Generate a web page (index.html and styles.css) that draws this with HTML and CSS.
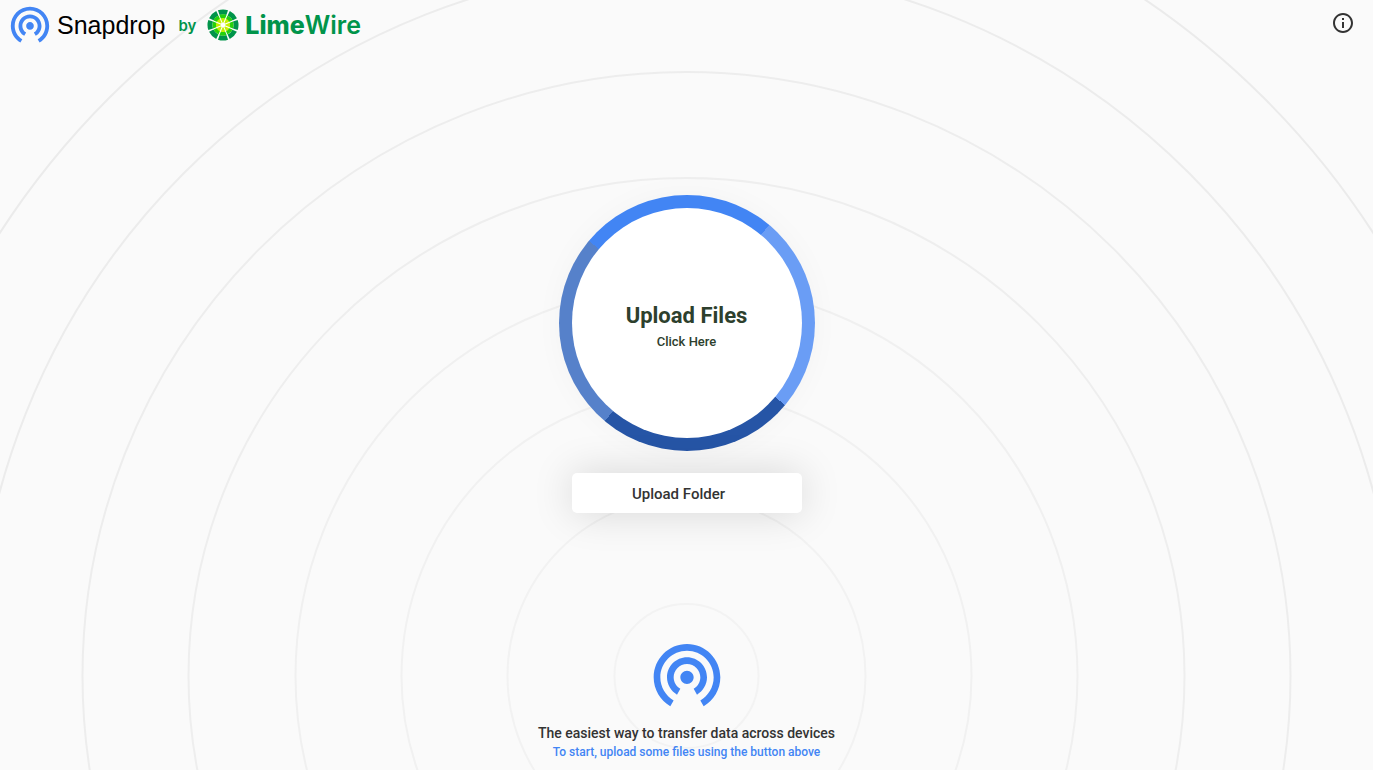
FILE: index.html
```
<!DOCTYPE html>
<html lang="en">
<head>
  <meta charset="UTF-8">
  <meta name="viewport" content="width=device-width, initial-scale=1.0">
  <title>Snapdrop</title>
  <link rel="stylesheet" href="styles.css">
</head>
<body>

  <svg class="background" aria-hidden="true">
    <g transform="translate(0 -94)">
      <circle cx="50%" cy="100%" r="72" stroke="#f3f3f3"/>
      <circle cx="50%" cy="100%" r="179" stroke="#f2f2f2"/>
      <circle cx="50%" cy="100%" r="285" stroke="#f1f1f1"/>
      <circle cx="50%" cy="100%" r="391" stroke="#f0f0f0"/>
      <circle cx="50%" cy="100%" r="498" stroke="#eeeeee"/>
      <circle cx="50%" cy="100%" r="604" stroke="#ededed"/>
      <circle cx="50%" cy="100%" r="711" stroke="#ececec"/>
      <circle cx="50%" cy="100%" r="817" stroke="#ebebeb"/>
    </g>
  </svg>

  <svg class="symbols" aria-hidden="true">
    <symbol id="snapdrop" viewBox="0 0 24 24">
      <path d="M12 11c-1.1 0-2 .9-2 2s.9 2 2 2 2-.9 2-2-.9-2-2-2zm6 2c0-3.31-2.69-6-6-6s-6 2.69-6 6c0 2.22 1.21 4.15 3 5.19l1-1.74c-1.19-.7-2-1.97-2-3.45 0-2.21 1.79-4 4-4s4 1.79 4 4c0 1.48-.81 2.75-2 3.45l1 1.74c1.79-1.04 3-2.97 3-5.19zM12 3C6.48 3 2 7.48 2 13c0 3.7 2.01 6.92 4.99 8.65l1-1.73C5.61 18.53 4 15.96 4 13c0-4.42 3.58-8 8-8s8 3.58 8 8c0 2.96-1.61 5.53-4 6.92l1 1.73c2.99-1.73 5-4.95 5-8.65 0-5.52-4.48-10-10-10z"/>
    </symbol>
  </svg>

  <header>
    <a class="brand" href="#">
      <svg class="brand-icon" aria-hidden="true"><use href="#snapdrop"/></svg>
      <span class="brand-name">Snapdrop</span>
      <span class="by">by</span>
      <svg class="lime" viewBox="-16 -16 32 32" aria-hidden="true">
        <g fill="none" transform="rotate(-22.5)">
          <circle r="13" stroke="#00944a" stroke-width="5" pathLength="80" stroke-dasharray="8.4 1.6" stroke-dashoffset="-0.8"/>
          <circle r="8.6" stroke="#26d00c" stroke-width="4"/>
          <circle r="4.6" stroke="#c4f000" stroke-width="5"/>
          <path d="M-11 0H11M0-11V11M-7.8-7.8L7.8 7.8M-7.8 7.8L7.8-7.8" stroke="#fff"/>
        </g>
        <circle r="2.2" fill="#fff"/>
      </svg>
      <span class="limewire"><b>Lime</b>Wire</span>
    </a>
    <a class="about" href="#about" aria-label="About">
      <svg viewBox="0 0 24 24" aria-hidden="true">
        <path d="M11 17h2v-6h-2v6zm1-15C6.480 2 2 6.480 2 12s4.480 10 10 10 10-4.480 10-10S17.520 2 12 2zm0 18c-4.410 0-8-3.590-8-8s3.590-8 8-8 8 3.590 8 8-3.590 8-8 8zM11 9h2V7h-2v2z"/>
      </svg>
    </a>
  </header>

  <main>
    <div class="ring">
      <button type="button" class="upload-files">
        <span class="upload-title">Upload Files</span>
        <span class="upload-hint">Click Here</span>
      </button>
    </div>
    <button type="button" class="upload-folder">Upload Folder</button>
  </main>

  <footer>
    <svg class="footer-icon" aria-hidden="true"><use href="#snapdrop"/></svg>
    <div class="slogan">The easiest way to transfer data across devices</div>
    <div class="start">To start, upload some files using the button above</div>
  </footer>

</body>
</html>
```
FILE: styles.css
```
* {
  box-sizing: border-box;
}

body {
  font-family: Roboto, sans-serif;
  background-color: #fafafa;
  color: #333;
  margin: 0;
  min-height: 100vh;
  display: flex;
  flex-direction: column;
}

.background {
  position: absolute;
  top: 0;
  left: 0;
  width: 100%;
  height: 100%;
  z-index: -1;
  fill: none;
  stroke-width: 2;
}

.symbols {
  display: none;
}

header {
  display: flex;
  justify-content: space-between;
  align-items: flex-start;
  padding: 1px 18px 0 7px;
}

.brand {
  display: flex;
  align-items: center;
  height: 48px;
  color: #00944a;
  text-decoration: none;
}

.brand-icon {
  width: 46px;
  height: 46px;
  margin-bottom: 2px;
  fill: #4285f4;
}

.brand-name {
  font-family: "Liberation Sans", Arial, sans-serif;
  font-size: 25px;
  color: #000;
  margin-left: 4px;
}

.by {
  font-family: Inter, sans-serif;
  font-size: 15px;
  font-weight: 600;
  margin-left: 13px;
}

.lime {
  width: 32px;
  height: 32px;
  margin-left: 11px;
}

.limewire {
  font-family: Inter, sans-serif;
  font-size: 25px;
  font-weight: 600;
  margin-left: 6px;
}

.limewire b {
  font-weight: 800;
}

.about {
  display: flex;
  margin-top: 10px;
}

.about svg {
  width: 24px;
  height: 24px;
  fill: #333;
}

main {
  flex: 1;
  display: flex;
  flex-direction: column;
  align-items: center;
  justify-content: center;
  gap: 22px;
  padding-top: 24px;
}

.ring {
  padding: 13px;
  border-radius: 50%;
  background: conic-gradient(from 40deg, #6a9df5 0 90deg, #2655a6 0 180deg, #5681ca 0 270deg, #4285f4 0);
  box-shadow: 0 0 30px rgba(0, 0, 0, 0.03);
}

button {
  font-family: inherit;
  border: none;
  background-color: #fff;
  cursor: pointer;
}

.upload-files {
  display: flex;
  flex-direction: column;
  align-items: center;
  justify-content: center;
  gap: 6px;
  width: 230px;
  height: 230px;
  padding: 6px 0 0;
  border-radius: 50%;
  color: #2d402d;
}

.upload-title {
  font-size: 22px;
  font-weight: 700;
}

.upload-hint {
  font-size: 13px;
  font-weight: 500;
}

.upload-folder {
  width: 230px;
  height: 40px;
  padding: 2px 16px 0 0;
  border-radius: 5px;
  color: #333;
  font-size: 15px;
  font-weight: 500;
  box-shadow: 0 0 40px rgba(0, 0, 0, 0.15);
}

footer {
  display: flex;
  flex-direction: column;
  align-items: center;
  padding-bottom: 9px;
  font-weight: 500;
}

.footer-icon {
  width: 80px;
  height: 80px;
  fill: #4285f4;
  margin-bottom: 9px;
}

.slogan {
  font-size: 14px;
  line-height: 20px;
}

.start {
  font-size: 12px;
  line-height: 18px;
  color: #4285f4;
}
```
